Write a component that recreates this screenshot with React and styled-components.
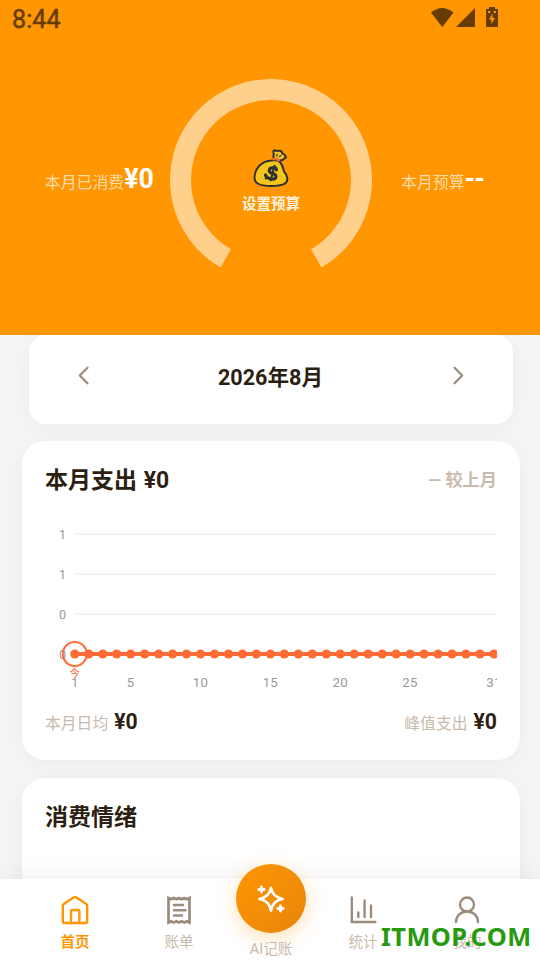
import React from 'react'
import styled, { createGlobalStyle } from 'styled-components';

const GlobalStyle = createGlobalStyle`
    * {
        box-sizing: border-box;
    }
    body {
        margin: 0;
        background: #f5f5f5;
        color: #2c1f12;
        font-family: Roboto, "Noto Sans CJK SC", sans-serif;
    }
`

const Container = styled.div`
    position: relative;
    display: flex;
    flex-direction: column;
    width: 540px;
    height: 960px;
    overflow: hidden;
    background: #f5f5f5;
`

const Header = styled.header`
    position: relative;
    z-index: 1;
    flex: none;
    height: 335px;
    background: #ff9602;
`

const StatusBar = styled.div`
    display: flex;
    justify-content: space-between;
    height: 40px;
    padding: 7px 41px 0 12px;
    color: #663c01;
`

const Clock = styled.span`
    font-size: 25px;
    line-height: 26px;
    font-weight: 400;
    letter-spacing: 0.1px;
    -webkit-text-stroke: 0.5px #663c01;
`

const Budget = styled.div`
    display: grid;
    grid-template-columns: 170px 202px 168px;
    padding-top: 39px;
`

const BudgetSide = styled.div`
    display: flex;
    align-items: baseline;
    justify-content: ${props => props.$end ? "flex-start" : "flex-end"};
    height: 34px;
    margin-top: 83px;
    padding: ${props => props.$end ? "0 0 0 29px" : "0 16px 0 0"};
    line-height: 34px;
    white-space: nowrap;
`

const BudgetLabel = styled.span`
    font-size: 15.9px;
    font-weight: 400;
    color: #ffdca8;
`

const BudgetValue = styled.span`
    font-size: 26.8px;
    font-weight: 700;
    letter-spacing: ${props => props.$tight ? "-0.8px" : "0"};
    color: #fff;
`

const Gauge = styled.div`
    display: grid;
    width: 202px;
    height: 202px;

    > * {
        grid-area: 1 / 1;
    }
`

const GaugeCenter = styled.div`
    display: flex;
    flex-direction: column;
    align-items: center;
    padding-top: 70px;
`

const GaugeText = styled.span`
    margin-top: 7px;
    font-size: 14.5px;
    line-height: 20px;
    font-weight: 700;
    color: #fff3df;
`

const Card = styled.section`
    flex: none;
    background: #fff;
    box-shadow: 0 4px 22px rgba(0, 0, 0, 0.045);
`

const MonthCard = styled(Card)`
    display: flex;
    justify-content: space-between;
    align-items: flex-start;
    width: 484px;
    height: 89px;
    margin-left: 29px;
    padding: 28px 48px 0 47px;
    border-radius: 17px;
`

const MonthText = styled.span`
    font-size: 21.6px;
    line-height: 29px;
    font-weight: 700;
`

const MonthButton = styled.button`
    display: flex;
    padding: 2px 0 0;
    border: none;
    background: none;
    color: #9c8c7c;
    cursor: pointer;
`

const SpendCard = styled(Card)`
    width: 498px;
    height: 319px;
    margin: 17px 0 0 22px;
    padding: 23px 23px 0;
    border-radius: 23px;
`

const MoodCard = styled(Card)`
    width: 498px;
    height: 240px;
    margin: 18px 0 0 22px;
    padding: 23px;
    border-radius: 23px;
`

const Row = styled.div`
    display: flex;
    justify-content: space-between;
    align-items: center;
`

const Title = styled.h2`
    margin: 0;
    padding-top: 1px;
    font-size: 23px;
    line-height: 32px;
    font-weight: 700;
    word-spacing: 1px;
`

const Compare = styled.span`
    font-size: 17.2px;
    line-height: 33px;
    font-weight: 700;
    color: #c8bbad;
`

const Chart = styled.svg`
    display: block;
    width: 452px;
    height: 186px;
    margin-top: 18px;
    overflow: hidden;
`

const Stat = styled.div`
    display: flex;
    align-items: baseline;
    gap: 6px;
    margin-top: 7px;
    line-height: 28px;
`

const StatLabel = styled.span`
    font-size: 15.8px;
    font-weight: 400;
    color: #c8bbad;
`

const StatValue = styled.span`
    font-size: 21.2px;
    font-weight: 700;
`

const TabBar = styled.nav`
    position: absolute;
    left: 0;
    right: 0;
    bottom: 0;
    display: grid;
    grid-template-columns: 104px 104px 80px 104px 104px;
    height: 81px;
    padding: 0 21px 0 23px;
    background: rgba(255, 255, 255, 0.97);
    box-shadow: 0 -4px 22px rgba(0, 0, 0, 0.05);
`

const Tab = styled.div`
    display: flex;
    flex-direction: column;
    align-items: center;
    padding-top: 14px;
    color: ${props => props.$active ? "#ff9602" : "#9c8c7c"};
`

const TabLabel = styled.span`
    margin-top: 5px;
    font-size: 14.5px;
    line-height: 22px;
    font-weight: ${props => props.$active ? 700 : 400};
    color: ${props => props.$active ? "#ff9602" : "#c8bbad"};
`

const AddTab = styled(Tab)`
    padding-top: 0;
    margin-top: -15px;
`

const AddButton = styled.button`
    display: flex;
    align-items: center;
    justify-content: center;
    width: 70px;
    height: 69px;
    margin-bottom: 1px;
    padding: 0;
    border: none;
    border-radius: 50%;
    background: linear-gradient(135deg, #ff9602, #e6850a);
    box-shadow: 0 5px 20px rgba(255, 150, 2, 0.3);
    cursor: pointer;
`

const Watermark = styled.div`
    position: absolute;
    left: 381px;
    top: 918px;
    font-family: "Noto Sans", "Open Sans", sans-serif;
    font-size: 25.4px;
    line-height: 36px;
    font-weight: 700;
    letter-spacing: 0.45px;
    color: #289a12;
    white-space: nowrap;
`

const StatusIcons = () => (
    <svg width="72" height="24" viewBox="427 7 72 24" fill="currentColor">
        <path d="M431 12.5Q442 3.500 453.500 12.500L442.300 27Z" />
        <path d="M456 27L475 8V27Z" />
        <path fillRule="evenodd" d="M489 9V7h6v2h3v18h-12V9ZM488 11v2h2.200V11ZM493.800 11v2h2.200V11ZM492.500 13.500l-3.500 6h2.300v4.500l3.700-6h-2.500Z" />
    </svg>
)

const MoneyBag = () => (
    <svg width="36" height="39" viewBox="0 0 36 39" fill="none" stroke="#2f3030" strokeWidth="2" strokeLinecap="round" strokeLinejoin="round">
        <path fill="#f5c51e" d="M18.500 11.500C9 12 2 19 1.500 28c-.300 6 4.500 9 16.500 9s16.800-2.300 16.300-8c-.300-3-1.300-4.500-3.300-6.500-1-5-2.500-8-5-10.500-2-1-5-1-7.500-.500Z" />
        <path fill="#f5c51e" d="M21 9.500C19.500 7.500 21.500 5.500 20.500 4c-.500-1.800.500-3 2-2.500 1.500 1 2.500 0 4 .300 1.500 0 2.500.700 2.500 2.400 1.800.800 3.500 2.200 4 4-1.700 1.800-4 3.300-6.700 3.500Z" />
        <path stroke="#ed6c30" strokeWidth="2.400" d="M20.500 10.200c2-.500 3.500 0 5.500 1" />
        <path d="M26.500 7.500l1.500-1M24 5.500V7" strokeWidth="1.300" />
        <path strokeWidth="3" d="M23.500 20.500c-1.500-3-7.500-2-7.300 1.500.200 3.300 7 1.800 6.800 5.500-.300 3.500-7.500 4-10.500-1.500" />
        <path strokeWidth="2.200" d="M21.500 16.800l-3.800 14.400M12.500 25.500l.5 4M23 18.500l.5 3" />
    </svg>
)

const Chevron = ({ right }) => (
    <svg width="14" height="22" viewBox="0 0 14 22" fill="none" stroke="currentColor" strokeWidth="2.200" strokeLinecap="round" strokeLinejoin="round">
        <path d={right ? "M3.500 2.700l7.700 7.800-7.700 7.800" : "M11.500 2.700L3.800 10.500l7.700 7.800"} />
    </svg>
)

const lineIcon = {
    width: 32,
    height: 34,
    viewBox: "0 0 32 34",
    fill: "none",
    stroke: "currentColor",
    strokeWidth: 2.4,
    strokeLinecap: "round",
    strokeLinejoin: "round",
}

const HomeIcon = () => (
    <svg {...lineIcon}>
        <path d="M3.800 13Q3.800 11.800 4.800 11L15 4.200q1-.700 2 0L27.200 11q1 .700 1 2v15q0 2-2 2H5.800Q3.800 30 3.800 28Z" />
        <path d="M12 30V18q0-1 1-1h6.400q1 0 1 1V30" />
    </svg>
)

const BillIcon = () => (
    <svg {...lineIcon}>
        <path strokeLinejoin="miter" strokeWidth="2.700" d="M5.500 5l2.600 1.300L10.800 5l2.600 1.300L16 5l2.600 1.300L21.200 5l2.600 1.300L26.500 5v24.500l-2.700-1.300-2.600 1.300-2.600-1.300L16 29.500l-2.600-1.300-2.600 1.300-2.700-1.300-2.600 1.300Z" />
        <path d="M11 12h9M11 17.200h11.500M11 22.500h8" />
    </svg>
)

const StatsIcon = () => (
    <svg {...lineIcon}>
        <path d="M4.800 4.500V29H28.300M11.300 24v-4.500M17.600 24V7.500M24 24V12.500" />
    </svg>
)

const MineIcon = () => (
    <svg {...lineIcon}>
        <circle cx="16" cy="11.500" r="7" />
        <path d="M5 29c0-6.500 5-10.500 11-10.500s11 4 11 10.500" />
    </svg>
)

const SparkIcon = () => (
    <svg width="28" height="28" viewBox="0 0 28 28" fill="none" stroke="#fff" strokeWidth="2.800" strokeLinecap="round" strokeLinejoin="round">
        <path d="M14 3c1.500 6.500 4.500 9.500 11.500 11-7 1.500-10 4.500-11.500 11.500-1.500-7-4.500-10-11.500-11.500C9.500 12.500 12.500 9.500 14 3Z" />
        <path d="M4.500 1.800v5.400M1.800 4.500h5.400M23.500 20.800v5.400M20.800 23.500h5.400" />
    </svg>
)

const days = Array.from({ length: 31 }, (_, i) => i + 1);
const dayLabels = [1, 5, 10, 15, 20, 25, 31];
const dayX = (day) => 29.8 + (day - 1) * 13.97;
const ticks = [
    { y: 18, label: "1" },
    { y: 58, label: "1" },
    { y: 98, label: "0" },
    { y: 138, label: "0" },
];

const SpendChart = () => (
    <Chart viewBox="0 -1 452 186" fontFamily='Roboto, "Noto Sans CJK SC", sans-serif'>
        {ticks.map((tick, i) => (
            <g key={i}>
                <text x="21" y={tick.y + 5} fontSize="12.5" textAnchor="end" fill="#999">{tick.label}</text>
                {i < 3 && <path d={`M29 ${tick.y}H450`} stroke="#f2f2f2" strokeWidth="2" />}
            </g>
        ))}
        {dayLabels.map((day) => (
            <text key={day} x={dayX(day)} y="171" fontSize="13.200" letterSpacing="0.3" textAnchor="middle" fill="#999">{day}</text>
        ))}
        <path d="M29.800 138H448.900" stroke="#ff6b35" strokeWidth="4" />
        {days.map((day) => (
            <circle key={day} cx={dayX(day)} cy="138" r="4.600" fill="#ff6b35" />
        ))}
        <circle cx={dayX(1)} cy="138" r="12" fill="none" stroke="#ff6b35" strokeWidth="2" />
        <text x={dayX(1)} y="161" fontSize="10.500" textAnchor="middle" fill="#ff6b35">今</text>
    </Chart>
)

const App = () => {
  return (
    <>
        <GlobalStyle />
        <Container>
            <Header>
                <StatusBar>
                    <Clock>8:44</Clock>
                    <StatusIcons />
                </StatusBar>
                <Budget>
                    <BudgetSide>
                        <BudgetLabel>本月已消费</BudgetLabel>
                        <BudgetValue>¥0</BudgetValue>
                    </BudgetSide>
                    <Gauge>
                        <svg width="202" height="202" viewBox="0 0 202 202">
                            <path d="M55.750 179.370A90.500 90.500 0 1 1 146.250 179.370" fill="none" stroke="#ffcf8c" strokeWidth="21" />
                        </svg>
                        <GaugeCenter>
                            <MoneyBag />
                            <GaugeText>设置预算</GaugeText>
                        </GaugeCenter>
                    </Gauge>
                    <BudgetSide $end>
                        <BudgetLabel>本月预算</BudgetLabel>
                        <BudgetValue $tight>--</BudgetValue>
                    </BudgetSide>
                </Budget>
            </Header>
            <MonthCard>
                <MonthButton aria-label="上个月"><Chevron /></MonthButton>
                <MonthText>2026年8月</MonthText>
                <MonthButton aria-label="下个月"><Chevron right /></MonthButton>
            </MonthCard>
            <SpendCard>
                <Row>
                    <Title>本月支出 ¥0</Title>
                    <Compare>— 较上月</Compare>
                </Row>
                <SpendChart />
                <Row>
                    <Stat>
                        <StatLabel>本月日均</StatLabel>
                        <StatValue>¥0</StatValue>
                    </Stat>
                    <Stat>
                        <StatLabel>峰值支出</StatLabel>
                        <StatValue>¥0</StatValue>
                    </Stat>
                </Row>
            </SpendCard>
            <MoodCard>
                <Title>消费情绪</Title>
            </MoodCard>
            <TabBar>
                <Tab $active>
                    <HomeIcon />
                    <TabLabel $active>首页</TabLabel>
                </Tab>
                <Tab>
                    <BillIcon />
                    <TabLabel>账单</TabLabel>
                </Tab>
                <AddTab>
                    <AddButton><SparkIcon /></AddButton>
                    <TabLabel>AI记账</TabLabel>
                </AddTab>
                <Tab>
                    <StatsIcon />
                    <TabLabel>统计</TabLabel>
                </Tab>
                <Tab>
                    <MineIcon />
                    <TabLabel>我的</TabLabel>
                </Tab>
            </TabBar>
            <Watermark>ITMOP.COM</Watermark>
        </Container>
    </>
  )
}

export default App
